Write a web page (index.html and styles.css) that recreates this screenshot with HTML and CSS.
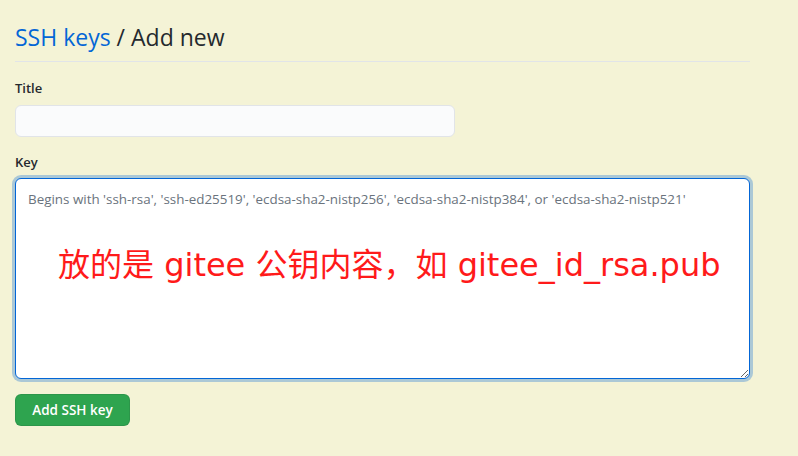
FILE: index.html
```html
<!DOCTYPE html>
<html>
<head>
<meta charset="utf-8">
<link rel="stylesheet" href="styles.css">
</head>
<body>
<div class="page">
  <h2 class="subhead"><a class="crumb" href="#">SSH keys</a> / Add new</h2>
  <form class="form">
    <div class="group">
      <label class="label">Title</label>
      <input class="input" type="text">
    </div>
    <div class="group key-group">
      <label class="label">Key</label>
      <div class="area-wrap">
        <textarea class="area" placeholder="Begins with 'ssh-rsa', 'ssh-ed25519', 'ecdsa-sha2-nistp256', 'ecdsa-sha2-nistp384', or 'ecdsa-sha2-nistp521'"></textarea>
        <div class="note">放的是 gitee 公钥内容，如 gitee_id_rsa.pub</div>
      </div>
    </div>
    <button class="btn" type="button">Add SSH key</button>
  </form>
</div>
</body>
</html>
```
FILE: styles.css
```css
html, body {
  margin: 0;
  padding: 0;
  background: #f4f3d6;
}
body {
  font-family: "Open Sans", "Noto Sans", "Noto Sans CJK SC", sans-serif;
  color: #24292e;
}
.page {
  width: 735px;
  padding: 19px 0 0 15px;
}
.subhead {
  margin: 0;
  font-weight: 400;
  font-size: 23px;
  line-height: 36px;
  padding-bottom: 6px;
  border-bottom: 1px solid #e1e4e8;
}
.crumb {
  color: #0366d6;
  text-decoration: none;
}
.form {
  padding-top: 16px;
}
.group {
  display: flex;
  flex-direction: column;
}
.label {
  font-size: 13px;
  font-weight: 600;
  line-height: 20px;
  margin-bottom: 7px;
}
.input {
  width: 440px;
  height: 32px;
  box-sizing: border-box;
  border: 1px solid #e1e4e8;
  border-radius: 6px;
  background: #fafbfc;
  margin: 0 0 15px 0;
}
.key-group .label {
  margin-bottom: 6px;
}
.area-wrap {
  position: relative;
}
.area {
  display: block;
  width: 735px;
  height: 201px;
  box-sizing: border-box;
  border: 1px solid #0366d6;
  border-radius: 6px;
  background: #fff;
  box-shadow: 0 0 0 3px rgba(3, 102, 214, 0.3);
  padding: 11px 12px;
  margin: 0;
  font-family: "Open Sans", "Noto Sans", sans-serif;
  font-size: 13.4px;
  outline: none;
  resize: both;
}
.area::placeholder {
  color: #6a737d;
}
.note {
  position: absolute;
  left: 43px;
  top: 66px;
  font-family: "DejaVu Sans", "Noto Sans CJK SC", sans-serif;
  font-size: 32px;
  line-height: 42px;
  color: #ff1a1a;
  white-space: nowrap;
}
.btn {
  margin-top: 15px;
  width: 115px;
  height: 32px;
  background: #2ea44f;
  color: #fff;
  border: 1px solid rgba(27, 31, 35, 0.1);
  border-radius: 6px;
  font-family: "Open Sans", "Noto Sans", sans-serif;
  font-weight: 600;
  font-size: 13.5px;
  padding: 0;
}
```
